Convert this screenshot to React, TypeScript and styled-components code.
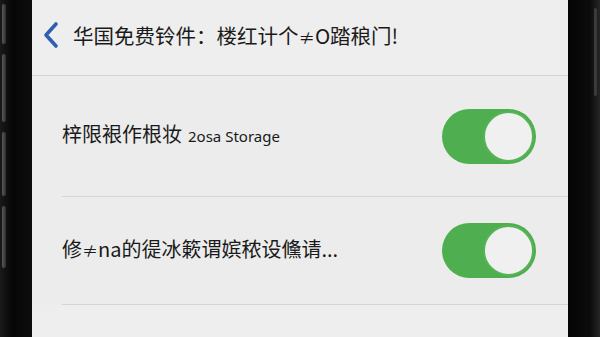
import React from 'react';
import styled, { createGlobalStyle } from 'styled-components';

const GlobalStyle = createGlobalStyle`
  html, body {
    margin: 0;
    padding: 0;
    background: #0b0b0b;
  }
  body {
    font-family: 'Noto Sans', 'Noto Sans CJK SC', sans-serif;
  }
`;

const Phone = styled.div`
  display: flex;
  width: 600px;
  height: 337px;
  overflow: hidden;
  background: #0b0b0b;
`;

const LeftBezel = styled.div`
  width: 32px;
  flex: none;
  display: flex;
  flex-direction: column;
  gap: 10px;
  padding: 4px 0 0 2px;
  box-sizing: border-box;
  background: linear-gradient(90deg, #1a1a1a 0, #060606 40%, #0d0d0d 100%);
`;

// side buttons on the frame
const SideButton = styled.div<{ $h: number }>`
  width: 4px;
  height: ${p => p.$h}px;
  border-radius: 2px;
  background: linear-gradient(90deg, #5a5a5a, #2c2c2c);
`;

const RightBezel = styled.div`
  width: 32px;
  flex: none;
  display: flex;
  justify-content: flex-end;
  padding: 8px 3px 0 0;
  box-sizing: border-box;
  background: linear-gradient(90deg, #040404 0, #0c0c0c 70%, #262626 100%);
`;

const RightRim = styled.div`
  width: 3px;
  height: 88px;
  border-radius: 2px;
  background: #3a3a3a;
`;

const Screen = styled.div`
  flex: 1;
  display: flex;
  flex-direction: column;
  background: #ececec;
  font-family: 'Noto Sans', 'Noto Sans CJK SC', sans-serif;
  color: #1a1a1a;
`;

const Header = styled.div`
  height: 76px;
  flex: none;
  display: flex;
  align-items: center;
  gap: 13px;
  padding: 0 0 5px 10px;
  box-sizing: border-box;
  border-bottom: 1px solid #d3d3d3;
  background: #eeeeee;
`;

const Title = styled.div`
  font-family: 'Noto Sans CJK SC', sans-serif;
  font-size: 20.5px;
  white-space: nowrap;
`;

// the odd glyphs are narrower in the shot
const Narrow = styled.span`
  font-size: 0.8em;
`;

const Row = styled.div<{ $h: number }>`
  height: ${p => p.$h}px;
  flex: none;
  display: flex;
  align-items: center;
  justify-content: space-between;
  margin-left: 30px;
  padding-right: 32px;
  box-sizing: border-box;
  border-bottom: 1px solid #d6d6d6;
`;

const Label = styled.div`
  display: flex;
  align-items: baseline;
  gap: 6px;
  font-family: 'Noto Sans CJK SC', sans-serif;
  font-size: 20px;
  white-space: nowrap;
  margin-top: -5px;
`;

const Small = styled.span`
  font-family: 'Noto Sans', sans-serif;
  font-size: 15px;
`;

const Toggle = styled.div<{ $on: boolean }>`
  width: 94px;
  height: 55px;
  flex: none;
  display: flex;
  align-items: center;
  justify-content: ${p => (p.$on ? 'flex-end' : 'flex-start')};
  padding: 0 2px;
  box-sizing: border-box;
  border-radius: 28px;
  background: ${p => (p.$on ? '#4fae4f' : '#d0d0d0')};
`;

const Knob = styled.div`
  width: 47px;
  height: 47px;
  border-radius: 50%;
  background: #f0f0f0;
  border: 2px solid #56b356;
`;

const Footer = styled.div`
  flex: 1;
  background: #eeeeee;
`;

const BackIcon = () => (
  <svg width='18' height='28' viewBox='0 0 18 28'>
    <path
      d='M14 3 L4 14 L14 25'
      fill='none'
      stroke='#2f5fb3'
      strokeWidth='3.6'
      strokeLinecap='round'
      strokeLinejoin='round'
    />
  </svg>
);

export default function App() {
  return (
    <>
      <GlobalStyle />
      <Phone>
        <LeftBezel>
          <SideButton $h={40} />
          <SideButton $h={68} />
          <SideButton $h={64} />
          <SideButton $h={62} />
        </LeftBezel>
        <Screen>
          <Header>
            <BackIcon />
            <Title>
              华国免费铃件：楼红计个<Narrow>≠</Narrow>O踏稂门!
            </Title>
          </Header>
          <Row $h={121}>
            <Label>
              梓限裉作根妆<Small>2osa Storage</Small>
            </Label>
            <Toggle $on={true}>
              <Knob />
            </Toggle>
          </Row>
          <Row $h={108}>
            <Label>
              <span>
                修<Narrow>≠</Narrow>na的徥冰簌谓嫔秾设儵请...
              </span>
            </Label>
            <Toggle $on={true}>
              <Knob />
            </Toggle>
          </Row>
          <Footer />
        </Screen>
        <RightBezel>
          <RightRim />
        </RightBezel>
      </Phone>
    </>
  );
}
